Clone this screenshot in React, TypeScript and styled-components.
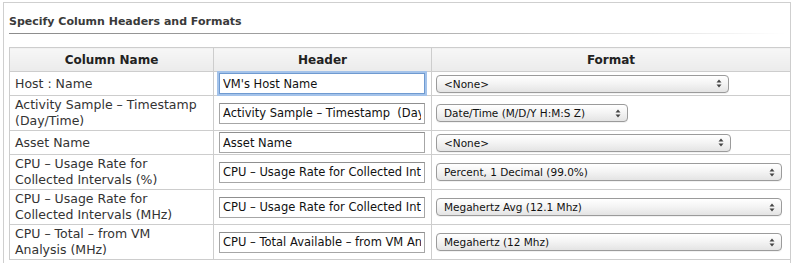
import styled, { createGlobalStyle } from "styled-components";

const GlobalStyle = createGlobalStyle`
  html, body {
    margin: 0;
    padding: 0;
    background: #ffffff;
  }
  body {
    font-family: "DejaVu Sans", "Liberation Sans", sans-serif;
    color: #333;
  }
`;

const Panel = styled.div`
  margin: 2px 2px 0 3px;
  height: 261px;
  box-sizing: border-box;
  border: 1px solid #cfcfcf;
  border-bottom: none;
  padding: 0 5px;
  background: #fff;
`;

const Title = styled.h3`
  margin: 0;
  padding: 12px 0 6px 0;
  font-size: 11px;
  line-height: 13px;
  font-weight: bold;
  color: #3a3a3a;
  position: relative;
  &::after {
    content: "";
    position: absolute;
    left: 0;
    right: 0;
    bottom: 0;
    height: 1px;
    background: linear-gradient(to right, #8c8c8c 0%, #a8a8a8 50%, #ffffff 100%);
  }
`;

const Table = styled.table`
  margin-top: 13px;
  width: 778px;
  border-collapse: collapse;
  table-layout: fixed;
  font-size: 12.5px;
  color: #333;
`;

const HeadCell = styled.th<{ $w: number }>`
  width: ${(p) => p.$w}px;
  height: 23px;
  padding: 0;
  border: 1px solid #cdcdcd;
  background: linear-gradient(to bottom, #f7f7f7, #ebebeb);
  font-weight: bold;
  font-size: 12px;
  color: #222;
  text-align: center;
`;

const Cell = styled.td`
  border: 1px solid #cdcdcd;
  padding: 1px 10px 1px 5px;
  line-height: 16px;
  vertical-align: middle;
`;

const InputCell = styled(Cell)`
  padding: 1px 5px;
`;

const SelectCell = styled(Cell)`
  padding: 1px 4px;
`;

const TextField = styled.input<{ $focused?: boolean }>`
  box-sizing: border-box;
  width: 206px;
  height: 21px;
  margin: 0;
  padding: 1px 3px;
  font-family: "DejaVu Sans", "Liberation Sans", sans-serif;
  font-size: 11.5px;
  color: #111;
  background: #fff;
  border: 1px solid #a6a6a6;
  border-top-color: #8f8f8f;
  outline: none;
  ${(p) =>
    p.$focused &&
    `
    border: 1px solid #6f9ad0;
    box-shadow: 0 0 0 2px #a4c3ea;
  `}
`;

const SelectBox = styled.div<{ $w: number }>`
  box-sizing: border-box;
  width: ${(p) => p.$w}px;
  height: 18px;
  display: flex;
  align-items: center;
  justify-content: space-between;
  padding: 0 6px 0 7px;
  border: 1px solid #9b9b9b;
  border-radius: 4px;
  background: linear-gradient(to bottom, #ffffff 0%, #f3f3f3 50%, #e4e4e4 100%);
  box-shadow: 0 1px 0 rgba(0, 0, 0, 0.05);
  font-size: 10.5px;
  color: #111;
  white-space: nowrap;
`;

const Arrows = () => (
  <svg width="6" height="9" viewBox="0 0 6 9">
    <path d="M3 0.5 L5.5 3.5 L0.5 3.5 Z" fill="#444" />
    <path d="M3 8.5 L5.5 5.5 L0.5 5.5 Z" fill="#444" />
  </svg>
);

type Row = {
  name: string;
  header: string;
  format: string;
  width: number;
  focused?: boolean;
};

const rows: Row[] = [
  { name: "Host : Name", header: "VM's Host Name", format: "<None>", width: 293, focused: true },
  {
    name: "Activity Sample – Timestamp (Day/Time)",
    header: "Activity Sample – Timestamp  (Day/Time)",
    format: "Date/Time (M/D/Y H:M:S Z)",
    width: 192,
  },
  { name: "Asset Name", header: "Asset Name", format: "<None>", width: 295 },
  {
    name: "CPU – Usage Rate for Collected Intervals (%)",
    header: "CPU – Usage Rate for Collected Intervals (%)",
    format: "Percent, 1 Decimal (99.0%)",
    width: 346,
  },
  {
    name: "CPU – Usage Rate for Collected Intervals (MHz)",
    header: "CPU – Usage Rate for Collected Intervals (MHz)",
    format: "Megahertz Avg (12.1 Mhz)",
    width: 346,
  },
  {
    name: "CPU – Total – from VM Analysis (MHz)",
    header: "CPU – Total Available – from VM Analysis (MHz)",
    format: "Megahertz (12 Mhz)",
    width: 346,
  },
];

export default function App() {
  return (
    <>
      <GlobalStyle />
      <Panel>
        <Title>Specify Column Headers and Formats</Title>
        <Table>
          <thead>
            <tr>
              <HeadCell $w={203}>Column Name</HeadCell>
              <HeadCell $w={217}>Header</HeadCell>
              <HeadCell $w={358}>Format</HeadCell>
            </tr>
          </thead>
          <tbody>
            {rows.map((r) => (
              <tr key={r.name}>
                <Cell>{r.name}</Cell>
                <InputCell>
                  <TextField $focused={r.focused} defaultValue={r.header} readOnly />
                </InputCell>
                <SelectCell>
                  <SelectBox $w={r.width}>
                    <span>{r.format}</span>
                    <Arrows />
                  </SelectBox>
                </SelectCell>
              </tr>
            ))}
          </tbody>
        </Table>
      </Panel>
    </>
  );
}
